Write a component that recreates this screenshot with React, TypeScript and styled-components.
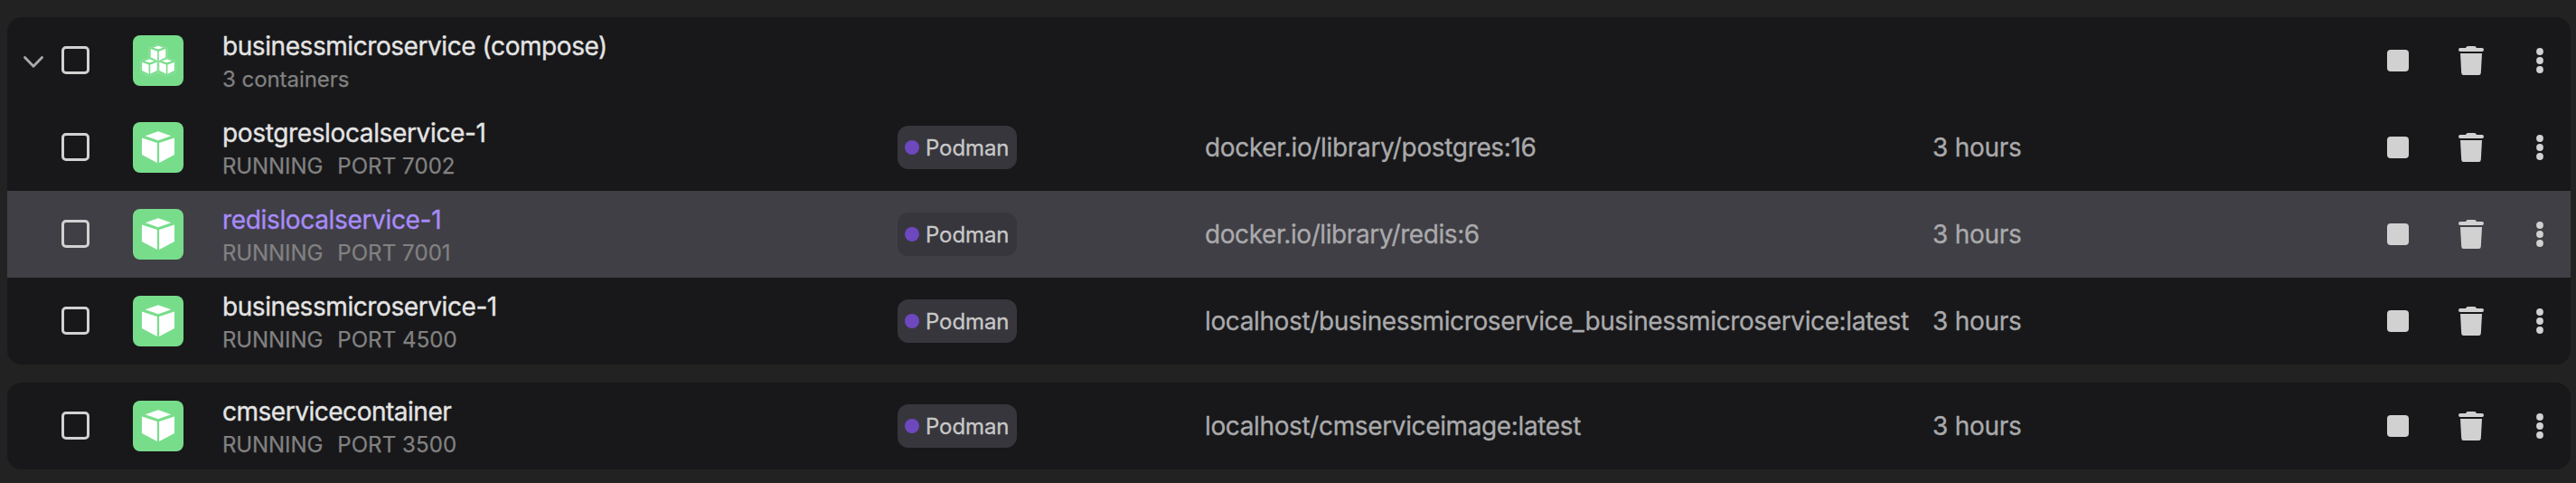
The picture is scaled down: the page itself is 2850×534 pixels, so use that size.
import React from "react";
import styled, { createGlobalStyle, css } from "styled-components";

const GlobalStyle = createGlobalStyle`
  * { box-sizing: border-box; }
  body { margin: 0; background: #222222; font-family: Inter, "Liberation Sans", sans-serif; }
`;

const Page = styled.main`
  display: flex;
  flex-direction: column;
  gap: 20px;
  height: 534px;
  padding: 19px 6px 0 8px;
`;

const Group = styled.section`
  border-radius: 16px;
  overflow: hidden;
  background: #18181a;
`;

const Row = styled.div<{ $hovered?: boolean }>`
  display: grid;
  grid-template-columns: 60px 79px 99px 747px 340px 1fr;
  align-items: center;
  height: 96px;
  background: ${(p) => (p.$hovered ? "#403f45" : "transparent")};
`;

const Toggle = styled.div`
  display: flex;
  padding: 3px 0 0 18px;
`;

const Checkbox = styled.span`
  display: block;
  width: 31px;
  height: 31px;
  margin-bottom: 1px;
  border: 3px solid #d1d1d1;
  border-radius: 5px;
`;

const Status = styled.div`
  display: flex;
  align-items: center;
  justify-content: center;
  width: 56px;
  height: 56px;
  border-radius: 8px;
  background: #78dd8b;
`;

const line = css`
  width: max-content;
  white-space: pre;
`;

const Name = styled.div<{ $active?: boolean; $spacing: number }>`
  ${line}
  font-size: 28px;
  line-height: 40px;
  letter-spacing: ${(p) => p.$spacing}px;
  color: ${(p) => (p.$active ? "#a78bfa" : "#e4e4e4")};
  -webkit-text-stroke: 0.35px currentColor;
`;

const Details = styled.div`
  display: flex;
  padding-top: 1px;
  margin-bottom: -1px;
  font-size: 24px;
  line-height: 32px;
  color: #818181;
`;

const DetailText = styled.span<{ $spacing?: number }>`
  ${line}
  letter-spacing: ${(p) => p.$spacing ?? 0}px;
  -webkit-text-stroke: 0.25px currentColor;

  & + & {
    margin-left: 16px;
  }
`;

const Badge = styled.div`
  display: flex;
  align-items: center;
  gap: 8px;
  width: 132px;
  height: 48px;
  padding-left: 8px;
  border-radius: 12px;
  background: #37363d;
  color: #c8c8c8;
  font-size: 24px;
`;

const BadgeLabel = styled.span`
  ${line}
  margin-left: -1px;
  letter-spacing: -0.1px;
  -webkit-text-stroke: 0.3px currentColor;
`;

const Dot = styled.span`
  width: 16px;
  height: 16px;
  border-radius: 50%;
  background: #6d48bf;
`;

const Cell = styled.div<{ $spacing: number }>`
  ${line}
  font-size: 28px;
  line-height: 40px;
  letter-spacing: ${(p) => p.$spacing}px;
  color: #aaaaac;
  -webkit-text-stroke: 0.3px currentColor;
`;

const LastColumns = styled.div`
  display: grid;
  grid-template-columns: 805px 1fr;
  align-items: center;
`;

const AgeAndActions = styled.div`
  display: flex;
  align-items: center;
  justify-content: space-between;
`;

const Actions = styled.div`
  display: flex;
  align-items: center;
  padding-right: 30px;
  margin-left: auto;
`;

const StopSquare = styled.span`
  width: 24px;
  height: 24px;
  margin-right: 55px;
  border-radius: 4px;
  background: #d1d1d1;
`;

const TrashIcon = styled.svg`
  margin-right: 58px;
`;

const Chevron = () => (
  <svg width="22" height="13" viewBox="0 0 22 13" fill="none" stroke="#aaaaac" strokeWidth="2.8" strokeLinecap="round" strokeLinejoin="round">
    <path d="M1.500 1.500 11 11.300 20.500 1.500" />
  </svg>
);

const Cube = () => (
  <svg width="36" height="36" viewBox="0 0 36 36" fill="#fff">
    <path d="M18 .2 32.300 5.200 18 10.300 3.700 5.200Z" />
    <path d="M0 7.500 16.900 13V35.100L0 26Z" />
    <path d="M36 7.500 19.100 13V35.100L36 26Z" />
  </svg>
);

const smallCubes = [
  [18, 0],
  [8.4, 14.7],
  [27.6, 14.7],
];

const Cubes = () => (
  <svg width="40" height="36" viewBox="-2 0 40 36" fill="#fff">
    {smallCubes.map(([x, y]) => (
      <g key={`${x}-${y}`} transform={`translate(${x} ${y})`}>
        <path d="M0 .5 10.200 4.100V16.500L0 20.600-10.200 16.500V4.100Z" fill="none" stroke="#a4e8b0" strokeWidth=".5" />
      </g>
    ))}
    {smallCubes.map(([x, y]) => (
      <g key={`${x}-${y}`} transform={`translate(${x} ${y})`}>
        <path d="M0 1.800 5.500 3.700 0 5.600-5.500 3.700Z" />
        <path d="M-8.300 5.100-.8 7.700V18.100L-8.300 14.200Z" />
        <path d="M8.300 5.100 .8 7.700V18.100L8.300 14.200Z" />
      </g>
    ))}
  </svg>
);

const Trash = () => (
  <TrashIcon width="28" height="32" viewBox="0 0 28 32" fill="#d1d1d1">
    <path d="M2 2H8Q8.600 0 10.500 0H17.500Q19.400 0 20 2H26Q28 2 28 4T26 6H2Q0 6 0 4T2 2Z" />
    <path d="M2 8H26L24.800 29.500Q24.600 32 22.500 32H5.500Q3.400 32 3.200 29.500Z" />
  </TrashIcon>
);

const Dots = () => (
  <svg width="8" height="28" viewBox="0 0 8 28" fill="#d1d1d1">
    <circle cx="4" cy="4" r="3.900" />
    <circle cx="4" cy="14" r="3.900" />
    <circle cx="4" cy="24" r="3.900" />
  </svg>
);

const RowActions = () => (
  <Actions>
    <StopSquare />
    <Trash />
    <Dots />
  </Actions>
);

interface Container {
  name: string;
  nameSpacing: number;
  port: string;
  image: string;
  imageSpacing: number;
  hovered?: boolean;
}

const composeContainers: Container[] = [
  { name: "postgreslocalservice-1", nameSpacing: -0.36, port: "7002", image: "docker.io/library/postgres:16", imageSpacing: -0.34 },
  { name: "redislocalservice-1", nameSpacing: -0.34, port: "7001", image: "docker.io/library/redis:6", imageSpacing: -0.42, hovered: true },
  {
    name: "businessmicroservice-1",
    nameSpacing: -0.42,
    port: "4500",
    image: "localhost/businessmicroservice_businessmicroservice:latest",
    imageSpacing: -0.38,
  },
];

const standalone: Container = {
  name: "cmservicecontainer",
  nameSpacing: -0.48,
  port: "3500",
  image: "localhost/cmserviceimage:latest",
  imageSpacing: -0.37,
};

const ContainerRow = ({ name, nameSpacing, port, image, imageSpacing, hovered }: Container) => (
  <Row $hovered={hovered}>
    <Toggle />
    <Checkbox />
    <Status><Cube /></Status>
    <div>
      <Name $active={hovered} $spacing={nameSpacing}>{name}</Name>
      <Details>
        <DetailText $spacing={-0.1}>RUNNING</DetailText>
        <DetailText $spacing={0.1}>PORT {port}</DetailText>
      </Details>
    </div>
    <Badge><Dot /><BadgeLabel>Podman</BadgeLabel></Badge>
    <LastColumns>
      <Cell $spacing={imageSpacing}>{image}</Cell>
      <AgeAndActions>
        <Cell $spacing={-0.25}>3 hours</Cell>
        <RowActions />
      </AgeAndActions>
    </LastColumns>
  </Row>
);

export default function App() {
  return (
    <>
      <GlobalStyle />
      <Page>
        <Group>
          <Row>
            <Toggle><Chevron /></Toggle>
            <Checkbox />
            <Status><Cubes /></Status>
            <div>
              <Name $spacing={-0.43}>businessmicroservice (compose)</Name>
              <Details><DetailText $spacing={-0.05}>3 containers</DetailText></Details>
            </div>
            <span />
            <RowActions />
          </Row>
          {composeContainers.map((c) => <ContainerRow key={c.name} {...c} />)}
        </Group>
        <Group><ContainerRow {...standalone} /></Group>
      </Page>
    </>
  );
}
